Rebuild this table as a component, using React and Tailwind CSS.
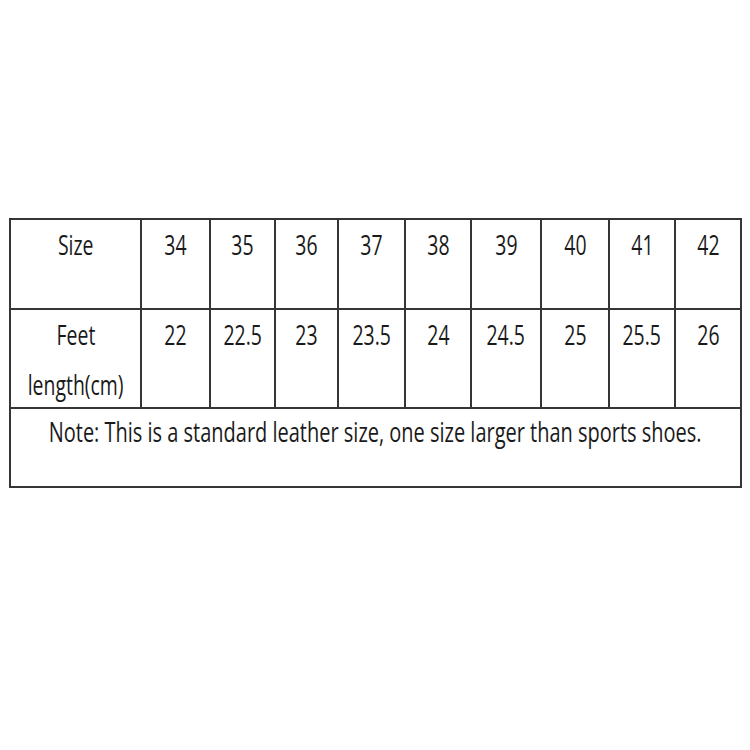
export default function App() {
  const sizes = ["34", "35", "36", "37", "38", "39", "40", "41", "42"];
  const feet = ["22", "22.5", "23", "23.5", "24", "24.5", "25", "25.5", "26"];
  const T = ({ children }) => (
    <div className="flex justify-center">
      <span className="inline-block shrink-0 scale-x-[0.72] whitespace-nowrap">{children}</span>
    </div>
  );
  return (
    <div
      className="w-[750px] h-[750px] bg-white text-[#1a1a1a] overflow-hidden"
      style={{ fontFamily: '"Open Sans", "Noto Sans", sans-serif' }}
    >
      <div className="pt-[218px] pl-[9px]">
        <div className="w-[733px] border-r-2 border-b-2 border-[#353535] text-[27px] leading-[50px]">
          <div className="grid grid-cols-[131px_69px_65px_63px_67px_66px_70px_68px_66px_66px]">
            <div className="h-[90px] border-l-2 border-t-2 border-[#353535]">
              <T>Size</T>
            </div>
            {sizes.map((s) => (
              <div key={s} className="h-[90px] border-l-2 border-t-2 border-[#353535]">
                <T>{s}</T>
              </div>
            ))}
            <div className="h-[99px] border-l-2 border-t-2 border-[#353535]">
              <T>Feet</T>
              <T>length(cm)</T>
            </div>
            {feet.map((s) => (
              <div key={s} className="h-[99px] border-l-2 border-t-2 border-[#353535]">
                <T>{s}</T>
              </div>
            ))}
          </div>
          <div className="h-[79px] border-l-2 border-t-2 border-[#353535] leading-[46px] overflow-hidden">
            <div className="flex justify-center">
              <span className="inline-block shrink-0 scale-x-[0.74] whitespace-nowrap">
                Note: This is a standard leather size, one size larger than sports shoes.
              </span>
            </div>
          </div>
        </div>
      </div>
    </div>
  );
}
